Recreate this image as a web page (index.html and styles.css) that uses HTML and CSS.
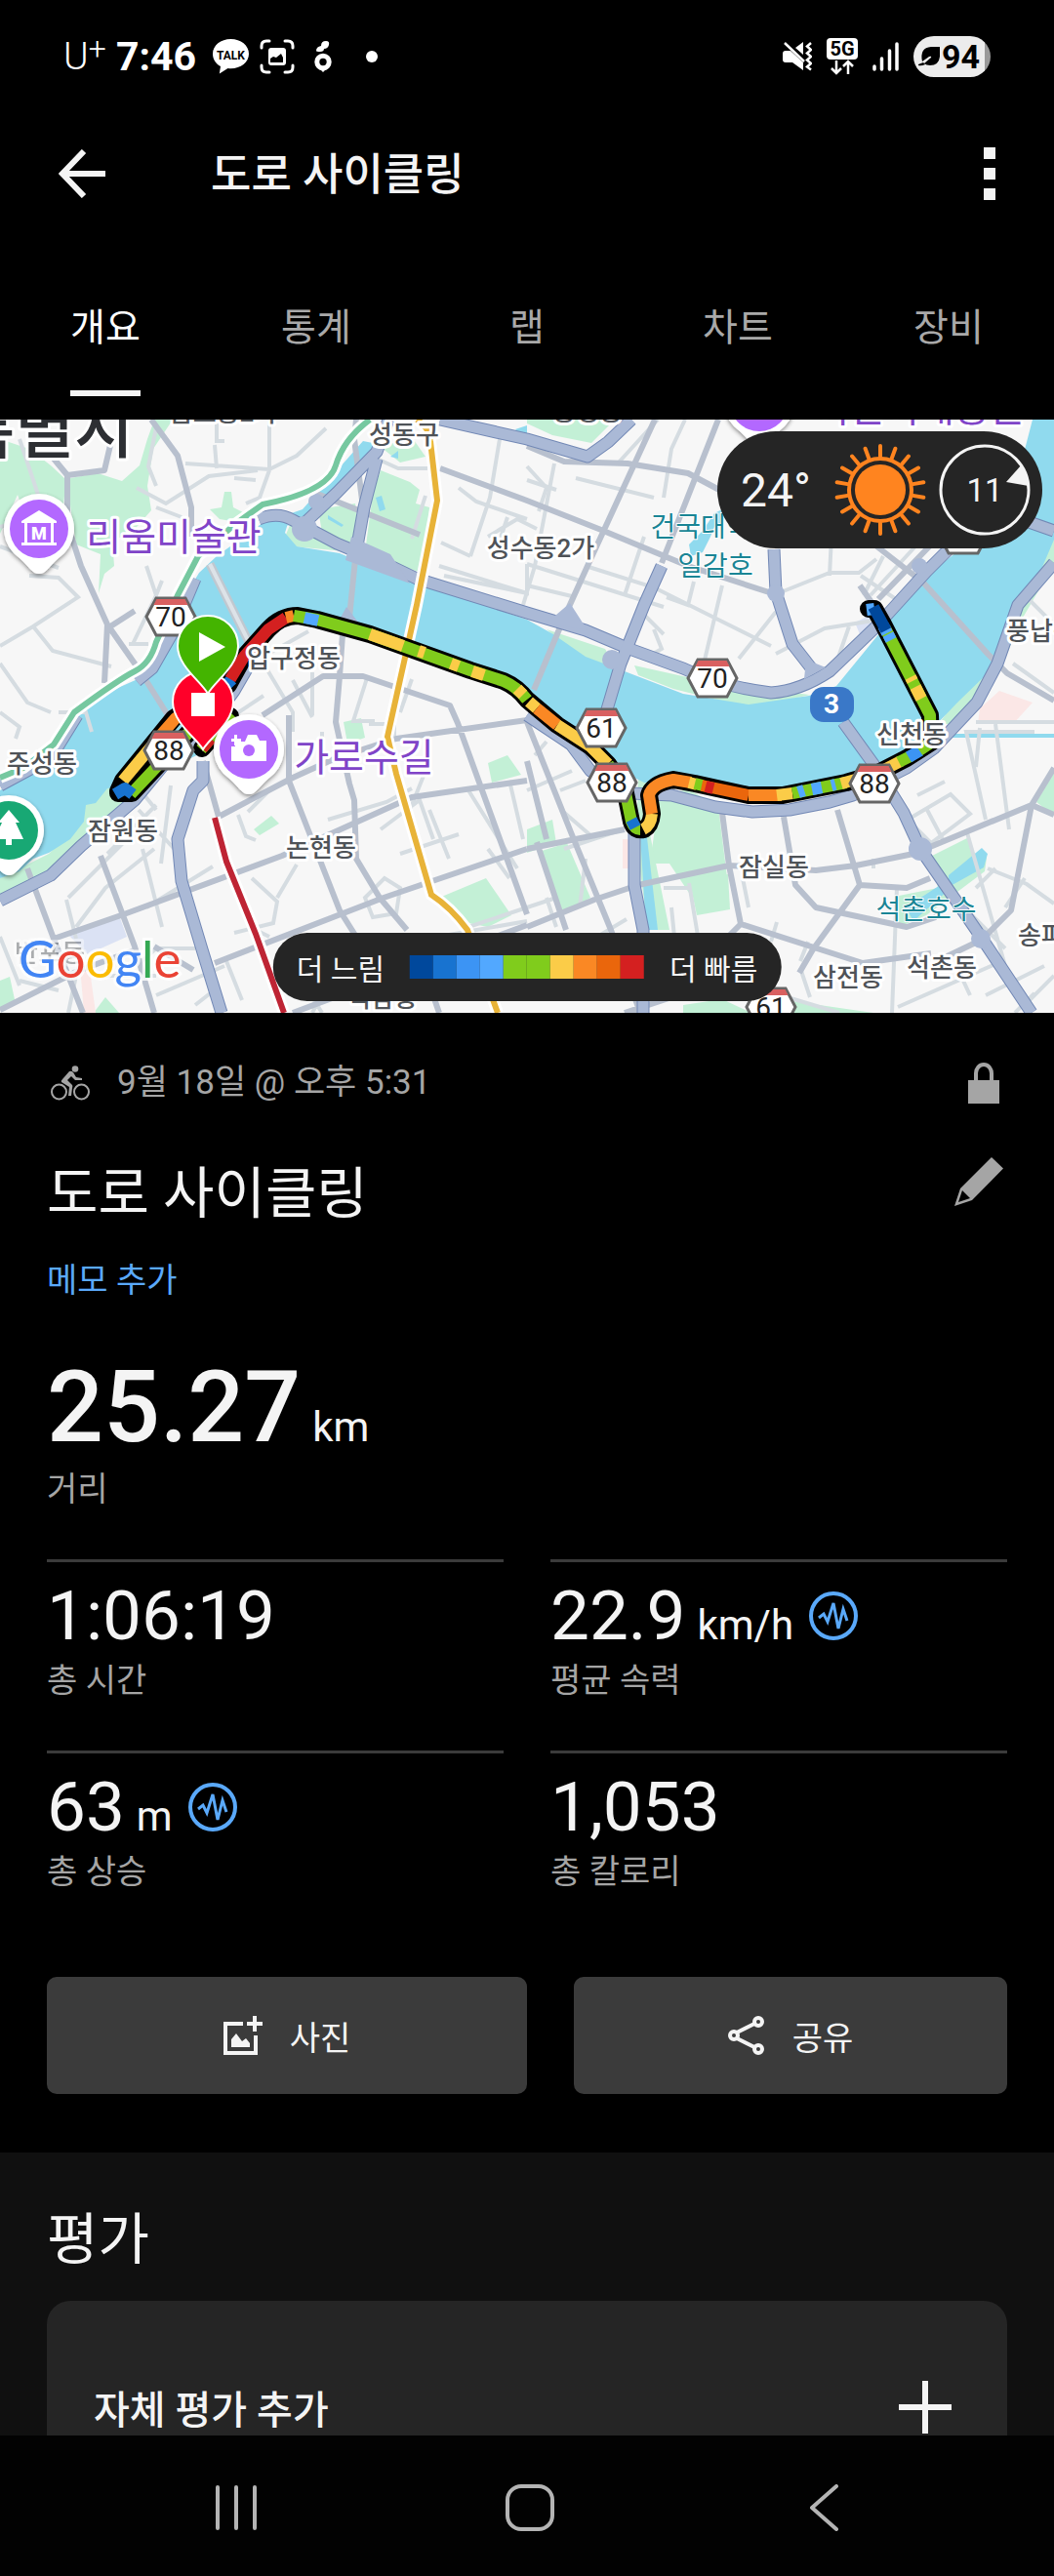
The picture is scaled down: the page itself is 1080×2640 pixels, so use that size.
FILE: index.html
```html
<!DOCTYPE html>
<html lang="ko">
<head>
<meta charset="utf-8">
<meta name="viewport" content="width=device-width, initial-scale=1">
<title>도로 사이클링</title>
<link rel="stylesheet" href="styles.css">
</head>
<body>
<div class="app">
  <div class="status">
    <div class="status-group">
      <span class="carrier">U<sup>+</sup></span>
      <span class="clock">7:46</span>
      <svg class="icon-talk" width="37" height="36" viewBox="0 0 37 36" aria-hidden="true">
        <path fill="#fff" d="M18.500 0C8.300 0 0 6.600 0 15.200c0 5.500 3.200 10.100 8 12.800L6.800 35.600l8.700-5.600c1 .2 2 .2 3 .2C28.700 30.200 37 23.800 37 15.200S28.700 0 18.500 0z"/>
        <text x="18.500" y="20.500" text-anchor="middle" class="talk-text">TALK</text>
      </svg>
      <svg class="icon-capture" width="36" height="36" viewBox="0 0 36 36" aria-hidden="true">
        <path fill="none" stroke="#fff" stroke-width="3" stroke-linecap="round" d="M2 9V7q0-5 5-5h3M26 2h3q5 0 5 5v2M34 27v2q0 5-5 5h-3M10 34H7q-5 0-5-5v-2"/>
        <rect x="9" y="9" width="18" height="18" rx="3" fill="#fff"/>
        <path d="M11 24v-4l3-2 3 1 5-4 2 4v5z"/>
      </svg>
      <svg class="icon-fruit" width="18" height="32" viewBox="0 0 18 32" aria-hidden="true">
        <circle cx="9" cy="21.500" r="6.200" fill="none" stroke="#fff" stroke-width="5"/>
        <path fill="#fff" d="M2 10q0-4 5-5 0-5 5-5 4 0 3 4-1 4-5 4 0 3-4 3-4 0-4-1zM5 28h8l-4 4z"/>
      </svg>
      <span class="dot"></span>
    </div>
    <div class="status-group status-right">
      <svg width="30" height="30" viewBox="0 0 30 30" aria-hidden="true">
        <path fill="#fff" d="M0 12q0-3 3-3h5l13 12v8L10 21H3q-3 0-3-3zM13 6l8-6v13z"/>
        <path fill="none" stroke="#fff" stroke-width="2.500" d="M2 1l20 19M29 1l-4 3.500 4 3.500-4 3.500 4 3.500-4 3.500 4 3.500-4 3.500 4 3"/>
      </svg>
      <svg width="32" height="38" viewBox="0 0 32 38" aria-hidden="true">
        <rect width="32" height="22" rx="4" fill="#fff"/>
        <text x="16" y="18" text-anchor="middle" class="net-text">5G</text>
        <path fill="none" stroke="#fff" stroke-width="2.500" d="M10 23v13M5 31l5 5 5-5M22 37V24M17 29l5-5 5 5"/>
      </svg>
      <svg width="27" height="30" viewBox="0 0 27 30" aria-hidden="true">
        <path stroke="#fff" stroke-width="3.500" stroke-linecap="round" d="M2 25v3M9.500 17v11M17.500 9v19M25 2v26"/>
      </svg>
      <span class="battery">
        <svg width="22" height="22" viewBox="0 0 22 22" aria-hidden="true">
          <path d="M22 1v10q-1 9-10 9-4 0-6-2l7-6q1-2-2-1l-7 5Q1 2 13 1zM0 20q3 1 7-1l-2-2-5 2z"/>
        </svg>94</span>
    </div>
  </div>

  <header class="topbar">
    <button class="icon-btn" aria-label="뒤로">
      <svg width="48" height="50" viewBox="0 0 48 50"><path fill="none" stroke="#f4f4f4" stroke-width="6" d="M48 25H5M26 2L4 25l22 23"/></svg>
    </button>
    <h1 class="topbar-title">도로 사이클링</h1>
    <button class="icon-btn" aria-label="더보기">
      <svg width="12" height="54" viewBox="0 0 12 54"><path fill="#f4f4f4" d="M0 0h12v12H0zM0 21h12v12H0zM0 42h12v12H0z"/></svg>
    </button>
  </header>

  <nav class="tabs">
    <a href="#overview" class="tab tab-active"><span>개요</span></a>
    <a href="#stats" class="tab"><span>통계</span></a>
    <a href="#laps" class="tab"><span>랩</span></a>
    <a href="#charts" class="tab"><span>차트</span></a>
    <a href="#gear" class="tab"><span>장비</span></a>
  </nav>

  <main class="content">
    <div class="map">
      <svg class="map-canvas" viewBox="0 0 1080 608" role="img" aria-label="경로 지도">
        <defs>
          <g id="shield">
            <path d="M-25 0l10-19h30l10 19-10 19h-30z" fill="#fff" stroke="#666" stroke-width="3"/>
            <path d="M-17.500-12l3-6h29l3 6z" fill="#d96060"/>
          </g>
          <path id="pin" d="M0 46C-7 46-9 40-20 30A36 36 0 1 1 20 30C9 40 7 46 0 46z" fill="#fff"/>
          <filter id="shadow" x="-30%" y="-30%" width="160%" height="160%"><feDropShadow dx="0" dy="2" stdDeviation="2" flood-opacity=".45"/></filter>
        </defs>
        <rect width="1080" height="608" fill="#f7f7f7"/>

        <!-- parks -->
        <g fill="#c3f0d6">
          <path d="M0 20l30 10 22 17 16 15-6 50-30 5-14-40-18 40z"/>
          <path d="M72 60l28-5 25 8 18-16 8-27 8-22 18 2-20 30-6 38 4 25-22 25-18 5 2 27-10 8-6 20 2-40-25-10-6-40z"/>
          <path d="M215 92l12-2 3-16 7 0 2 16 12 6-14 8-12-2z"/>
          <path d="M390 52l30 12 10 8-4 14 14 4-6 68-60-22 8-60z"/>
          <path d="M390 28l32-10 14 20-26 6z"/>
          <path d="M320 108l44 28-64-6-8-10 6-14z"/>
          <path d="M326 92l38-6 6 50-40-20z"/>
          <path d="M560 215l60 20 12 20-36-10zM650 252l90 20 90 10-60 14-80-20-36-14z"/>
          <path d="M540 0h90l-24 24-40-8-26-12z"/>
          <path d="M0 470l50-25 30-30 8-30 20-12 30 14-60 60-78 46z"/>
          <path d="M352 310l18-4 4 20-18 6zM500 352l20-8 14 20-30 8z"/>
          <path d="M260 420l18-14 8 8-20 12zM450 490l48-20 26 38-24 12-30-6z"/>
          <path d="M676 385l30-6 30 18 10 80-40 8-20-30-16 0 8 68-22 0z"/>
          <path d="M706 470l40-4 2 36-34 6z"/>
          <path d="M555 442l26-8 24 56-28 16zM654 365l16 0-4 60 20 98h-22l-12-90z"/>
          <path d="M540 420l26-10 4 24-30 10z"/>
          <path d="M955 447l36-18 6 20 14 0-2 14-60 45-28 12 0-32 40-8z"/>
          <path d="M1062 392l18-30v44z"/>
          <path d="M1058 178l22-60v30l-36 62-20 50-48 52-14 0z"/>
          <path d="M700 600l40-6 30 14h-70zM805 595l90 13h-90z"/>
          <path d="M0 575l10-4 6 28-16 6zM96 608l12-16 14 16z"/>
        </g>
        <g fill="#dbe2f4"><path d="M70 528l52-20 8 22-40 18zM876 208l16-8 12 14-18 18z"/></g>
        <g fill="#fbe7e6"><path d="M1004 296l20-18 34 12-20 22h-36zM82 560l10 4 6 44H86zM638 430l6 0 2 30h-8z"/></g>

        <!-- river -->
        <g fill="#90daee">
          <path d="M0 380L52 350 78 303 105 282 150 262 170 225 184 190 204 157 222 140 269 106 296 103 292 116 304 130 348 137 386 153 427 167 540 205 567 220 600 243 640 258 700 281 767 292 829 283 857 273 884 240 919 197 953 157 984 133 1020 90 1045 50 1058 0H1080V123L1057 177 1032 217 1015 257 981 290 960 312 945 335 895 357 850 375 780 385 700 375 660 372 640 362 615 345 588 323 545 294 523 278 482 263 413 237 358 219 324 210 303 205 275 223 251 243 238 268 210 340 148 370 110 378 98 393 88 395 86 412 72 430 50 444 34 450 20 463 0 470z"/>
          <path d="M372 22l20 4-50 58-30 26-42-4 40-14z"/>
          <path d="M385 80l6-2 4 14-6 2zM336 98l16 10-2 2-14-8zM400 38l8-6v8zM528 10l12-4v16zM732 96l8-4 2 12-10 6-4 10-8 16-12 4-2-12 14-14z"/>
          <path d="M656 424l6-4 12 103h-12z"/>
          <path d="M972 467l34-28 6 6-4 14-36 20zM928 500l40-26 4 8-36 32z"/>
          <path d="M970 322h110v4H970z"/>
        </g>

        <!-- local streets -->
        <g class="street">
          <path d="M222 0v22l8 0M222 50l-2-24M190 45l86 6 28-14 30-28M276 52V0M276 52l-10 28-14 6M240 60l22 2M160 90l26 10M140 70l30 16 44-28 50-6M160 8l-8 40 8 20M0 110l44-14M0 300l20 15-4 12"/>
          <path d="M0 130l60 22M30 160l30 2 20 20-46 30-34 20M34 212l20 25 60 16M0 250l28 40 24 10M20 20l20 60M60 300h28l6 20M150 150l10 30-24 50M166 165l-16 40M132 230l20 0"/>
          <path d="M386 40l22 10h30M512 20l-10 60-20 60M470 70l18 14 52 18M450 150l90 28M452 126l30 14M455 160l85 18 0-30M436 78l-14 44M500 120l30-18 20 10M540 48l20 22-8 24M520 100l-10 30"/>
          <path d="M568 45l-20 105-12 40M590 60l80 20M632 46l42-46M680 80l8-50 14-30M600 150l70 22 120 60M540 148l140 44M540 170l50 12M740 170l-20 85M640 180l20-60M683 182l22 8 6-24M800 177l50-20 30 0 18-14M850 160l2-40M882 160l36 24M870 212l-16 46M757 245l38-48M795 240l50-26 50-8M670 215l8 20-14 8"/>
          <path d="M660 200l20 20M700 150l20 6M540 62l30 10M892 180l90-98M905 140l-20 40M1050 180l30 30M1038 250l42 30M1000 310h80M1004 316l-4 40M1020 312l14 108"/>
          <path d="M300 267l20 38M316 217l-50 28M320 303v-44M376 265l-14 44 22 0M410 300l12-34M270 250l30 50v20M240 303l30-20M330 320l0 22M378 312h26v14"/>
          <path d="M160 400l-20-25M110 445l50-50M70 490l80-80M68 492l10 40M150 500l68-42M78 520l30-40 50-40M165 455l10-80M142 400l42 46M166 520l-20-80M244 405l8 22 10 4M254 402l20-20M258 470l26 24-4 22-40 10M284 490l20-34M336 410l60-18 26-14M390 420l40-30 14 40M410 445l60-20M420 400l20-50M440 400l20 50M500 440l22 30M374 490l20-20 16 10-4 26-24 4zM480 380l50 80M536 430l-14-60M540 500l-60 20M460 528l80-14"/>
          <path d="M0 530l20 50M20 575l40 10M80 560l-10 48M100 570l60 0M140 560l20-18 40 0M160 590l70-30M232 555l16 40M200 600l18-14M256 520l20 10M0 420l20 30M40 360l30-20M300 560l30 48M340 570l-20 38"/>
          <path d="M540 380l46-20M560 330l-12 14M600 370l-26 10M578 440l60-20M600 450l-6 50M560 490l10 30M612 530l30-18M575 400l30 26M540 500l30-10M680 480h26M706 475l10 60M688 500l4 40M767 500l-6-30M796 515l-6 20M820 555l8-20M820 562l10 30M800 590l60 18"/>
          <path d="M930 410l44-26 20 20-40 30zM950 400l18 34M1010 410l-20-90h70M990 420l40 140M970 482l60 60M1012 460l40 16 28 20M1030 500l20-30M919 480l-5 128M1010 590l60-30M980 560l14 30M1050 600l30-30M920 602l100-44M1040 608l20-20M1000 480l20-20M895 460l0-10M940 385l28-14"/>
        </g>

        <!-- arterials -->
        <g class="arterial">
          <path d="M155 0l27 37 14 53v30M69 57v50l14 43 27 60 35 50 27 43M55 40l14 17 38-5 7-30M110 210l-3 60M110 214l28-18M365 0l-2 20 9 70-7 43-7 70M351 220l-3 43-4 47 14 63 5 17 2 60 24 40 28 33"/>
          <path d="M320 74l60 24 50 20M451 50l89 33 76 30 89 37 83 27M540 27l38 16 65 2 62 10 32 17 10 26M671 0l-52 113-17 37-24 53-31 74M736 0l-58 147M860 100l86 67 66 73 20 20 48 28M895 190l-14-20M900 184l60-62"/>
          <path d="M269 303l62-40 41 0 89 30 8 18 71 196M224 407l76-40 44-20 62-20 134-19M296 370l52 133 17 27M55 532l72-25 162-60 133-60 118-17M220 557l173-67 147-50M103 447l35 93 20 68M28 460l27 72 30 76M0 605l80-40 60-22M296 303v67M208 350l16 57M300 608l80-30 160-60M158 540l40 24M430 550l20 58"/>
          <path d="M540 440l100-20M540 520l69-28 45-15 93-20 89 5 41-5 59-12 121-50 23 10M540 310l45 113 41 100 30 85M550 433l30 90M740 403l7 54 12 60 125 40 70-10M803 407l12 70 21 23 93 20 30-10M858 400l23 77-48 66-14 24M881 477l48 3 24-10M1080 357l-23 38-21 108-30 30-50 24M759 517l-40 40M640 608l120-40M540 350l20 80"/>
        </g>

        <!-- expressways -->
        <g>
          <g class="xway-edge">
            <path d="M0 375L52 347 79 303M140 268L156 255 176 220 200 163M265 102Q285 94 300 103L345 127 400 150 427 163 540 198 600 216 645 235 700 255Q740 274 790 280 820 278 850 258L900 210 950 155 985 120"/>
            <path d="M310 108l35-33 41-42 12-33M451 0l89 20 62 18 21-15 24-23M365 135l8-45 13-50"/>
            <path d="M0 493L52 467 83 437 138 390 175 345 205 325 240 278 262 240M540 303l45 30 20 27 42 23 41 2 45 12 38 5 38-2 41-8 24-7 55-28 28-20 44-47 21-40 21-60 37-43"/>
            <path d="M208 350v20l-10 10-16 50 4 43 21 70 20 65M678 150l-18 40-24 60-17 57M650 420v57l9 46v85M864 310l31 43 31 50 17 37 62 90 52 78M793 133l2 44 17 53 21 27M1040 100l40 14M780 0l8 8"/>
          </g>
          <g class="xway">
            <path d="M0 375L52 347 79 303M140 268L156 255 176 220 200 163M265 102Q285 94 300 103L345 127 400 150 427 163 540 198 600 216 645 235 700 255Q740 274 790 280 820 278 850 258L900 210 950 155 985 120"/>
            <path d="M310 108l35-33 41-42 12-33M451 0l89 20 62 18 21-15 24-23M365 135l8-45 13-50"/>
            <path d="M0 493L52 467 83 437 138 390 175 345 205 325 240 278 262 240M540 303l45 30 20 27 42 23 41 2 45 12 38 5 38-2 41-8 24-7 55-28 28-20 44-47 21-40 21-60 37-43"/>
            <path d="M208 350v20l-10 10-16 50 4 43 21 70 20 65M678 150l-18 40-24 60-17 57M650 420v57l9 46v85M864 310l31 43 31 50 17 37 62 90 52 78M793 133l2 44 17 53 21 27M1040 100l40 14M780 0l8 8"/>
          </g>
          <g fill="#aab9d6"><circle cx="312" cy="112" r="13"/><circle cx="324" cy="84" r="8"/><circle cx="627" cy="246" r="10"/><circle cx="943" cy="440" r="12"/><circle cx="1005" cy="532" r="10"/><circle cx="795" cy="178" r="9"/><circle cx="942" cy="150" r="8"/><path d="M360 120l40 18 20 30-66-24zM570 200l14-12 18 28-44-8zM345 210l10-18 20 26zM824 266l2-20 20 8z"/></g>
        </g>
        <path d="M215 148l42 84" stroke="#c0c8d0" stroke-width="9" fill="none"/>
        <path d="M215 148l42 84" stroke="#dde3e8" stroke-width="4" fill="none"/>

        <!-- subway lines -->
        <g class="rail-case">
          <path d="M379 0Q352 20 344 47T269 87L241 107 203 140 182 180 160 228Q154 250 138 258T76 300L55 333 24 357 0 367"/>
          <path d="M427 0Q440 8 441 22L448 83 427 190 401 307 397 325 406 363 442 487Q462 500 479 523L510 608"/>
          <path d="M220 408L232 453 262 527 291 608"/>
        </g>
        <g class="rail">
          <path stroke="#76c8a0" d="M379 0Q352 20 344 47T269 87L241 107 203 140 182 180 160 228Q154 250 138 258T76 300L55 333 24 357 0 367"/>
          <path stroke="#e8b338" d="M427 0Q440 8 441 22L448 83 427 190 401 307 397 325 406 363 442 487Q462 500 479 523L510 608"/>
          <path stroke="#be2434" d="M220 408L232 453 262 527 291 608"/>
        </g>

        <!-- ride track -->
        <path class="track-case" d="M207 337L236 304M121 381L126 370 178 306 205 290 234 272 250 243 275 215Q288 201 305 201L325 205 379 220 482 257 516 268Q530 274 540 287L571 313 605 335 623 353 640 378 647 412Q650 422 660 420 667 416 668 404L665 385Q668 373 690 369L712 373 767 385 802 385 867 372 898 363 929 347 954 331 953 303 904 208 896 194 890 194M121 383l14 0 60-64"/>
        <g class="track">
          <path stroke="#80cc1c" d="M134 384l62-66M238 302l-32 36"/>
          <path stroke="#d42020" d="M216 327l-9 10"/>
          <path stroke="#fbcc48" d="M126 370l40-48"/><path stroke="#fa8824" d="M166 322l14-16 25-16"/>
          <path stroke="#1873d0" d="M118 384l10-6 8 6M226 277l12-11"/>
          <path stroke="#d42020" d="M236 266l14-23 25-28 18-12"/>
          <path stroke="#fa8824" d="M293 203l8-2"/>
          <path stroke="#80cc1c" d="M301 201l24 4 54 15 103 37 34 11q14 6 24 19"/>
          <path stroke="#52a8ff" d="M312 203l14 3"/>
          <path stroke="#fbcc48" d="M379 220l34 12M429 237l6 2M462 250l8 3M484 258l12 4M530 276l6 6M542 289l8 7"/>
          <path stroke="#fa8824" d="M550 296l21 17"/>
          <path stroke="#fbcc48" d="M571 313l34 22 18 18"/>
          <path stroke="#80cc1c" d="M623 353l17 25 7 34q3 8 9 8"/>
          <path stroke="#1873d0" d="M638 376l3 6M647 410l4 8"/>
          <path stroke="#fbcc48" d="M659 420q8-4 9-16"/>
          <path stroke="#fa8824" d="M668 404l-3-19q3-12 25-16l18 3"/>
          <path stroke="#fbcc48" d="M706 372l8 2"/>
          <path stroke="#80cc1c" d="M712 373l8 2"/>
          <path stroke="#ea660c" d="M719 375l48 10"/>
          <path stroke="#d42020" d="M723 376l8 2"/>
          <path stroke="#fa8824" d="M767 385h34"/>
          <path stroke="#fbcc48" d="M796 385l16-2"/>
          <path stroke="#80cc1c" d="M812 383l55-11"/>
          <path stroke="#52a8ff" d="M818 382l6-2M832 379l10-2M852 375l4-1"/>
          <path stroke="#fbcc48" d="M862 373l36-10 25-13"/>
          <path stroke="#80cc1c" d="M921 351l12-6"/>
          <path stroke="#3c94f4" d="M931 346l12-7"/>
          <path stroke="#80cc1c" d="M942 339l12-8-1-28-46-89"/>
          <path stroke="#fbcc48" d="M944 286l-6-12M935 268l-2-4"/>
          <path stroke="#52a8ff" d="M913 226l-3-6M905 211l4 8M888 195l8-1"/>
          <path stroke="#00489c" d="M895 192l13 24"/>
        </g>

        <!-- place names -->
        <g class="place">
          <text x="414" y="25">성동구</text>
          <text x="554" y="141">성수동2가</text>
          <text x="301" y="254">압구정동</text>
          <text x="43" y="362">주성동</text>
          <text x="126" y="431">잠원동</text>
          <text x="329" y="448">논현동</text>
          <text x="51" y="556" opacity=".45">반포동</text>
          <text x="392" y="602">역삼동</text>
          <text x="793" y="468">잠실동</text>
          <text x="934" y="332">신천동</text>
          <text x="869" y="581">삼전동</text>
          <text x="965" y="571">석촌동</text>
          <text x="1079" y="538">송파동</text>
          <text x="1067" y="226">풍납동</text>
          <text x="229" y="2">금호동2가</text>
          <text x="602" y="1">송정동</text>
        </g>
        <g class="lake">
          <text x="731" y="120">건국대학교</text>
          <text x="733" y="160">일감호</text>
          <text x="949" y="512">석촌호수</text>
        </g>
        <g class="poi">
          <text x="178" y="134">리움미술관</text>
          <text x="373" y="360">가로수길</text>
          <text x="942" y="2">어린이대공원</text>
        </g>
        <text class="city" x="137" y="34">서울특별시</text>

        <g class="shield-text">
          <use href="#shield" x="175" y="202"/><text x="175" y="212">70</text>
          <use href="#shield" x="173" y="339"/><text x="173" y="349">88</text>
          <use href="#shield" x="616" y="316"/><text x="616" y="326">61</text>
          <use href="#shield" x="627" y="372"/><text x="627" y="382">88</text>
          <use href="#shield" x="896" y="373"/><text x="896" y="383">88</text>
          <use href="#shield" x="730" y="265"/><text x="730" y="275">70</text>
          <use href="#shield" x="790" y="602"/><text x="790" y="612">61</text>
          <use href="#shield" x="987" y="118"/>
        </g>
        <rect x="830" y="274" width="45" height="36" rx="14" fill="#3a78c8"/>
        <text class="route-no" x="852" y="301">3</text>

        <!-- pins -->
        <g transform="translate(40 112)"><use href="#pin" filter="url(#shadow)"/><circle r="30" fill="#b368ff"/><path fill="#fff" d="M-18-8L0-19l18 11v2h-36zM-15-6h3v20h24V-6h3v20h3v3h-36v-3h3z"/><text y="11" class="pin-m">M</text></g>
        <g transform="translate(9 421)"><use href="#pin" filter="url(#shadow)"/><circle r="30" fill="#18a874"/><path fill="#fff" d="M0-21L11-8H7L15 9H3v6h-6V9h-12L-7-8h-4z"/></g>
        <g transform="translate(778 -18)"><use href="#pin" filter="url(#shadow)"/><circle r="30" fill="#b368ff"/></g>
        <g transform="translate(208 291)"><path d="M0 47C-6 36-31 20-31-2a31 31 0 0 1 62 0C31 20 6 36 0 47z" fill="#ff0029" stroke="#fff" stroke-width="2"/><path d="M-12-11h24v24h-24z" fill="#fff"/></g>
        <g transform="translate(255 338)"><use href="#pin" filter="url(#shadow)"/><circle r="30" fill="#b368ff"/><path fill="#fff" d="M-18-3h4v-5h10l3-7H8l3 6h7v21h-36zM-18-11h3v-4h3v4h4v3h-4v4h-3v-4h-3z"/><circle r="6" cy="1" fill="#b368ff"/></g>
        <g transform="translate(213 233)"><path d="M0 48C-6 36-31 20-31-1a31 31 0 0 1 62 0C31 20 6 36 0 48z" fill="#44b400" stroke="#fff" stroke-width="2"/><path d="M-9-15l27 15-27 15z" fill="#fff"/></g>

        <text class="google" x="19" y="572"><tspan fill="#4285f4">G</tspan><tspan fill="#ea4335">o</tspan><tspan fill="#fbbc05">o</tspan><tspan fill="#4285f4">g</tspan><tspan fill="#34a853">l</tspan><tspan fill="#ea4335">e</tspan></text>
      </svg>

      <div class="weather">
        <span class="temp">24°</span>
        <svg width="94" height="94" viewBox="-47 -47 94 94" aria-label="맑음">
          <circle r="26" fill="#ff841f"/><circle r="32" fill="none" stroke="#ff841f" stroke-width="4"/>
          <g stroke="#ff841f" stroke-width="4" stroke-linecap="round">
            <g id="rays"><path d="M0-34V-45M0 34V45"/><path transform="rotate(20)" d="M0-34V-45M0 34V45"/><path transform="rotate(40)" d="M0-34V-45M0 34V45"/></g>
            <use href="#rays" transform="rotate(60)"/><use href="#rays" transform="rotate(120)"/>
          </g>
        </svg>
        <span class="wind">
          <svg class="wind-ring" width="94" height="94" viewBox="-47 -47 94 94" aria-hidden="true"><circle r="45" fill="none" stroke="#f4f4f4" stroke-width="3"/><path fill="#f4f4f4" d="M22-8L38-26Q44-16 45-4z"/></svg>
          11</span>
      </div>

      <div class="legend">
        <span>더 느림</span>
        <span class="scale"><i class="c1"></i><i class="c2"></i><i class="c3"></i><i class="c4"></i><i class="c5"></i><i class="c5"></i><i class="c6"></i><i class="c7"></i><i class="c8"></i><i class="c9"></i></span>
        <span>더 빠름</span>
      </div>
    </div>

    <section class="activity" id="overview">
      <div class="meta">
        <svg width="40" height="36" viewBox="0 0 40 36" aria-hidden="true">
          <g fill="none" stroke="#a5a5a5" stroke-width="2"><circle cx="8.500" cy="27" r="7.500"/><circle cx="31.500" cy="27" r="7.500"/></g>
          <circle cx="25" cy="3.500" r="3.300" fill="#a5a5a5"/>
          <path fill="#a5a5a5" d="M19 6q2-1 4 1l3 5 6 1v2h-7l-4-4-4 4 4 4q2 1 1 4l-1 8h-3l1-9-8-5q-1-1 1-3z"/>
        </svg>
        <span class="date">9월 18일 @ 오후 5:31</span>
        <svg width="32" height="42" viewBox="0 0 32 42" aria-label="비공개"><path fill="#a5a5a5" d="M0 18h32v24H0z"/><path fill="none" stroke="#a5a5a5" stroke-width="4" d="M8 20V11a8 9 0 0 1 16 0v9"/></svg>
      </div>
      <div class="title-row">
        <h2 class="title">도로 사이클링</h2>
        <button class="icon-btn edit" aria-label="편집">
          <svg width="50" height="50" viewBox="0 0 50 50"><path fill="#a5a5a5" fill-rule="evenodd" d="M38 0l12 11.500L18 44 0 50 6 32zM8 34L4 46l12-4z"/></svg>
        </button>
      </div>
      <a href="#memo" class="memo">메모 추가</a>

      <div class="hero"><span class="hero-num">25.27</span><span class="unit">km</span></div>
      <div class="label">거리</div>

      <div class="stats">
        <div class="stat"><div class="value">1:06:19</div><div class="label">총 시간</div></div>
        <div class="stat"><div class="value">22.9<span class="unit">km/h</span>
          <svg class="wave" width="50" height="50" viewBox="0 0 50 50" aria-hidden="true"><circle cx="25" cy="25" r="23" fill="none" stroke="#5aa9fa" stroke-width="4"/><path fill="none" stroke="#5aa9fa" stroke-width="3" d="M10 27l5-4 4 8 6-19 5 26 5-20 4 12"/></svg></div><div class="label">평균 속력</div></div>
        <div class="stat"><div class="value">63<span class="unit">m</span>
          <svg class="wave" width="50" height="50" viewBox="0 0 50 50" aria-hidden="true"><circle cx="25" cy="25" r="23" fill="none" stroke="#5aa9fa" stroke-width="4"/><path fill="none" stroke="#5aa9fa" stroke-width="3" d="M10 27l5-4 4 8 6-19 5 26 5-20 4 12"/></svg></div><div class="label">총 상승</div></div>
        <div class="stat"><div class="value">1,053</div><div class="label">총 칼로리</div></div>
      </div>

      <div class="actions">
        <button class="action">
          <svg width="40" height="40" viewBox="0 0 40 40" aria-hidden="true"><path fill="none" stroke="#f4f4f4" stroke-width="4" d="M20 8H2v30h31V20M32 0v16M24 8h16"/><path fill="#f4f4f4" d="M8 32v-8l5-6 6 8 4-3 4 5v4z"/></svg>
          사진</button>
        <button class="action">
          <svg width="38" height="40" viewBox="0 0 38 40" aria-hidden="true"><path fill="none" stroke="#f4f4f4" stroke-width="4" d="M9 17L27 8M9 23l18 9"/><g fill="#3b3b3b" stroke="#f4f4f4" stroke-width="4"><circle cx="6" cy="20" r="4"/><circle cx="31" cy="6" r="4"/><circle cx="31" cy="34" r="4"/></g></svg>
          공유</button>
      </div>
    </section>

    <section class="rating">
      <h2 class="title">평가</h2>
      <button class="rating-card">
        <span>자체 평가 추가</span>
        <svg width="54" height="54" viewBox="0 0 54 54" aria-hidden="true"><path stroke="#f4f4f4" stroke-width="6" d="M27 0v54M0 27h54"/></svg>
      </button>
    </section>
  </main>

  <nav class="sysnav">
    <button class="icon-btn" aria-label="최근 앱"><svg width="44" height="46" viewBox="0 0 44 46"><path stroke="#b4b4b4" stroke-width="4" stroke-linecap="round" d="M3 2v42M22 2v42M41 2v42"/></svg></button>
    <button class="icon-btn" aria-label="홈"><svg width="50" height="48" viewBox="0 0 50 48"><rect x="2" y="2" width="46" height="44" rx="14" fill="none" stroke="#b4b4b4" stroke-width="4"/></svg></button>
    <button class="icon-btn" aria-label="뒤로"><svg width="30" height="48" viewBox="0 0 30 48"><path fill="none" stroke="#b4b4b4" stroke-width="4" stroke-linecap="round" stroke-linejoin="round" d="M28 2L3 24l25 22"/></svg></button>
  </nav>
</div>
</body>
</html>
```
FILE: styles.css
```css
* { box-sizing: border-box; }

body {
  margin: 0;
  background: #000;
  color: #f4f4f4;
  font-family: Roboto, "Noto Sans CJK KR", sans-serif;
}

h1, h2 { margin: 0; }
svg { flex: none; }
button { font: inherit; color: inherit; border: 0; cursor: pointer; }
a { text-decoration: none; }

.icon-btn { display: flex; padding: 0; background: none; }

.app { display: flex; flex-direction: column; height: 100vh; overflow: hidden; }

/* status bar */
.status {
  display: flex;
  flex: none;
  justify-content: space-between;
  align-items: center;
  height: 116px;
  padding: 0 65px;
  color: #fff;
}
.status-group { display: flex; align-items: center; }
.carrier { width: 54px; font-size: 39px; font-weight: 300; line-height: 40px; white-space: nowrap; }
.carrier sup { font-size: 32px; line-height: 0; vertical-align: 10px; }
.clock { width: 99px; font-size: 41px; font-weight: 700; line-height: 40px; }
.talk-text { font: 700 12px Roboto, sans-serif; }
.icon-capture { margin-left: 11px; }
.icon-fruit { margin-left: 20px; }
.dot { width: 12px; height: 12px; margin-left: 35px; border-radius: 50%; background: #fff; }
.status-right { gap: 15px; }
.net-text { font: 700 20px Roboto, sans-serif; }
.battery {
  display: flex;
  align-items: center;
  gap: 2px;
  height: 42px;
  padding: 0 11px 0 5px;
  border-radius: 21px;
  background: linear-gradient(90deg, #ececec 93%, #999 93%);
  color: #000;
  font-size: 34px;
  font-weight: 700;
}

/* title bar */
.topbar { display: flex; flex: none; align-items: center; height: 124px; padding: 0 60px; }
.topbar-title { flex: 1; margin-left: 108px; padding-top: 4px; font-size: 45px; font-weight: 500; line-height: 56px; }

.tabs { display: flex; flex: none; height: 190px; }
.tab { flex: 1; padding-top: 68px; text-align: center; font-size: 39px; line-height: 56px; color: #a9a9a9; }
.tab span { display: inline-block; height: 98px; }
.tab-active { color: #fff; }
.tab-active span { border-bottom: 6px solid #f4f4f4; }

.content { flex: 1; min-height: 0; overflow-y: auto; scrollbar-width: none; }

/* map */
.map { position: relative; }
.map-canvas { display: block; width: 100%; height: auto; }
.street { fill: none; stroke: #d5dce1; stroke-width: 4; }
.arterial { fill: none; stroke: #b8c0ce; stroke-width: 6; stroke-linejoin: round; }
.xway-edge { fill: none; stroke: #7288b5; stroke-width: 13; stroke-linejoin: round; }
.xway { fill: none; stroke: #aab9d6; stroke-width: 11; stroke-linejoin: round; }
.rail-case { fill: none; stroke: #fff; stroke-width: 12; }
.rail { fill: none; stroke-width: 6; }
.track-case { fill: none; stroke: #000; stroke-width: 18; stroke-linejoin: round; stroke-linecap: round; }
.track { fill: none; stroke-width: 12; stroke-linejoin: round; }
.place, .lake, .poi, .city { font-family: Roboto, "Noto Sans CJK KR", sans-serif; paint-order: stroke; stroke: #fff; stroke-linejoin: round; }
.place { font-size: 26px; font-weight: 500; fill: #4f5358; stroke-width: 6px; text-anchor: middle; }
.lake { font-size: 28px; fill: #1a8595; stroke-width: 2px; text-anchor: middle; }
.poi { font-size: 39px; fill: #8044c8; stroke-width: 6px; text-anchor: middle; }
.city { font-size: 66px; font-weight: 500; fill: #2d2f33; stroke-width: 6px; text-anchor: end; }
.shield-text { font-size: 28px; fill: #222; text-anchor: middle; }
.route-no { font-size: 28px; font-weight: 700; fill: #fff; text-anchor: middle; }
.pin-m { font-size: 18px; font-weight: 900; fill: #fff; text-anchor: middle; }
.google { font-family: Lato, sans-serif; font-size: 53px; font-weight: 400; paint-order: stroke; stroke: #fff; stroke-opacity: .8; stroke-width: 6px; }

.weather {
  position: absolute;
  top: 12px;
  right: 12px;
  display: flex;
  align-items: center;
  height: 120px;
  padding: 0 12px 0 24px;
  border-radius: 60px;
  background: #252525;
}
.temp { width: 96px; font-size: 48px; }
.wind {
  position: relative;
  display: flex;
  align-items: center;
  justify-content: center;
  width: 94px;
  height: 94px;
  margin-left: 13px;
  font-size: 33px;
}
.wind-ring { position: absolute; inset: 0; }

.legend {
  position: absolute;
  bottom: 12px;
  left: 50%;
  display: flex;
  align-items: center;
  gap: 26px;
  height: 70px;
  padding: 0 24px;
  border-radius: 35px;
  background: #252525;
  font-size: 30px;
  white-space: nowrap;
  transform: translateX(-50%);
}
.scale { display: flex; }
.scale i { width: 24px; height: 24px; }
.c1 { background: #00489c; }
.c2 { background: #1873d0; }
.c3 { background: #3c94f4; }
.c4 { background: #52a8ff; }
.c5 { background: #80cc1c; }
.c6 { background: #fbcc48; }
.c7 { background: #fa8824; }
.c8 { background: #ea660c; }
.c9 { background: #d42020; }

/* activity summary */
.activity { padding: 44px 48px 60px; }
.meta { display: flex; align-items: center; height: 56px; padding: 0 8px 0 4px; }
.date { flex: 1; margin-left: 28px; font-size: 35px; line-height: 48px; color: #a5a5a5; }
.title-row { display: flex; justify-content: space-between; align-items: flex-start; margin-top: 44px; }
.title { padding-top: 4px; font-size: 57px; font-weight: 400; line-height: 76px; }
.edit { margin: 4px 4px 0 0; }
.memo { display: block; margin-top: 26px; font-size: 34px; line-height: 48px; color: #5aa9fa; }
.hero { display: flex; align-items: baseline; margin-top: 46px; line-height: 120px; }
.hero-num { font-size: 102px; font-weight: 500; }
.unit { margin-left: 12px; font-size: 42px; line-height: 48px; }
.label { font-size: 34px; line-height: 48px; color: #a5a5a5; }

.stats { display: grid; grid-template-columns: 1fr 1fr; gap: 48px; margin-top: 48px; }
.stat { padding-top: 13px; border-top: 3px solid #3b3b3b; }
.value { display: flex; align-items: baseline; height: 84px; font-size: 71px; line-height: 84px; }
.wave { align-self: center; margin-left: 16px; }

.actions { display: grid; grid-template-columns: 41fr 37fr; gap: 48px; margin-top: 84px; }
.action {
  display: flex;
  align-items: center;
  justify-content: center;
  gap: 28px;
  height: 120px;
  border-radius: 10px;
  background: #3b3b3b;
  font-size: 34px;
}

.rating { padding: 48px 48px 0; background: #101010; }
.rating-card {
  display: flex;
  align-items: center;
  justify-content: space-between;
  width: 100%;
  height: 218px;
  margin-top: 24px;
  padding: 0 57px 0 48px;
  border-radius: 24px;
  background: #252525;
  font-size: 40px;
  font-weight: 500;
}

.sysnav { display: grid; flex: none; grid-template-columns: repeat(3, 1fr); height: 144px; padding: 4px 86px 0 92px; background: #020202; }
.sysnav .icon-btn { align-items: center; justify-content: center; }
```
